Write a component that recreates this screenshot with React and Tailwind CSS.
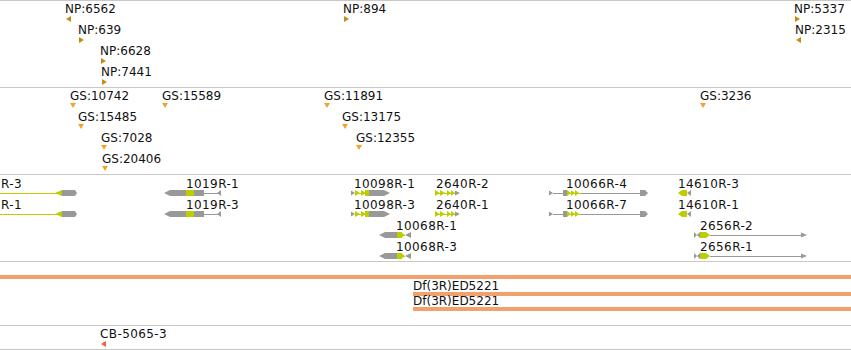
import React from "react";

// colours picked from the track glyphs
const NP_COL = "#c98a10";
const GS_COL = "#f1a42c";
const CB_COL = "#f0603c";
const YG = "#bdcd00";
const GR = "#999999";

const ROWS = [1, 22, 43, 64];
const GENE_ROWS = [2, 23, 44, 65];

const npFeatures = [
  { x: 66, row: 0, label: "NP:6562", dir: "left" },
  { x: 344, row: 0, label: "NP:894", dir: "right" },
  { x: 795, row: 0, label: "NP:5337", dir: "right" },
  { x: 79, row: 1, label: "NP:639", dir: "right" },
  { x: 796, row: 1, label: "NP:2315", dir: "left" },
  { x: 101, row: 2, label: "NP:6628", dir: "right" },
  { x: 102, row: 3, label: "NP:7441", dir: "right" },
];

const gsFeatures = [
  { x: 70, row: 0, label: "GS:10742" },
  { x: 162, row: 0, label: "GS:15589" },
  { x: 324, row: 0, label: "GS:11891" },
  { x: 700, row: 0, label: "GS:3236" },
  { x: 78, row: 1, label: "GS:15485" },
  { x: 342, row: 1, label: "GS:13175" },
  { x: 101, row: 2, label: "GS:7028" },
  { x: 356, row: 2, label: "GS:12355" },
  { x: 102, row: 3, label: "GS:20406" },
];

const geneLabels = [
  { x: 1, row: 0, label: "R-3" },
  { x: 186, row: 0, label: "1019R-1" },
  { x: 354, row: 0, label: "10098R-1" },
  { x: 436, row: 0, label: "2640R-2" },
  { x: 566, row: 0, label: "10066R-4" },
  { x: 678, row: 0, label: "14610R-3" },
  { x: 1, row: 1, label: "R-1" },
  { x: 186, row: 1, label: "1019R-3" },
  { x: 354, row: 1, label: "10098R-3" },
  { x: 436, row: 1, label: "2640R-1" },
  { x: 566, row: 1, label: "10066R-7" },
  { x: 678, row: 1, label: "14610R-1" },
  { x: 396, row: 2, label: "10068R-1" },
  { x: 700, row: 2, label: "2656R-2" },
  { x: 396, row: 3, label: "10068R-3" },
  { x: 700, row: 3, label: "2656R-1" },
];

function Tri({ dir, color }) {
  if (dir === "down")
    return (
      <svg width="6" height="5" className="block">
        <polygon points="0,0 6,0 3,5" fill={color} />
      </svg>
    );
  return (
    <svg width="5" height="6" className="block">
      <polygon points={dir === "left" ? "0,3 5,0 5,6" : "0,0 5,3 0,6"} fill={color} />
    </svg>
  );
}

// a point feature: label with its marker right under it
function Marker({ f, top, color, dir, shift = 0 }) {
  return (
    <div className="absolute flex flex-col" style={{ left: f.x, top }}>
      <div className="whitespace-nowrap leading-[14px]" style={{ marginLeft: -shift }}>
        {f.label}
      </div>
      <Tri dir={dir} color={color} />
    </div>
  );
}

const triR = (x1, x2, c, h, fill) => (
  <polygon points={`${x1},${c - h / 2} ${x2},${c} ${x1},${c + h / 2}`} fill={fill} />
);
const triL = (x1, x2, c, h, fill) => (
  <polygon points={`${x1},${c} ${x2},${c - h / 2} ${x2},${c + h / 2}`} fill={fill} />
);
const box = (x1, x2, c, h, fill) => (
  <rect x={x1} y={c - h / 2} width={x2 - x1} height={h} fill={fill} />
);
const line = (x1, x2, c, fill) => <rect x={x1} y={c} width={x2 - x1} height={1} fill={fill} />;
const arrowL = (x1, x2, t, c, h, fill) => (
  <polygon
    points={`${x1},${c} ${x1 + t},${c - h / 2} ${x2},${c - h / 2} ${x2},${c + h / 2} ${x1 + t},${c + h / 2}`}
    fill={fill}
  />
);
const arrowR = (x1, x2, t, c, h, fill) => (
  <polygon
    points={`${x1},${c - h / 2} ${x2 - t},${c - h / 2} ${x2},${c} ${x2 - t},${c + h / 2} ${x1},${c + h / 2}`}
    fill={fill}
  />
);

function GeneA({ c }) {
  return (
    <g>
      {line(0, 57, c, YG)}
      {triL(55, 62, c, 6, YG)}
      {arrowR(62, 77, 2, c, 6, GR)}
    </g>
  );
}

function Gene1019({ c }) {
  return (
    <g>
      {arrowL(164, 186, 6, c, 6, GR)}
      {box(186, 194, c, 6, YG)}
      {box(194, 204, c, 6, GR)}
      {line(204, 218, c, GR)}
      {triL(217, 221, c, 6, GR)}
    </g>
  );
}

function Gene10098({ c }) {
  return (
    <g>
      {triR(351, 355, c, 5, GR)}
      {line(355, 366, c, YG)}
      {triR(355, 360, c, 6, YG)}
      {triR(361, 366, c, 6, YG)}
      {box(365, 369, c, 6, YG)}
      {arrowR(369, 390, 6, c, 6, GR)}
    </g>
  );
}

function Gene2640({ c }) {
  return (
    <g>
      {line(435, 455, c, YG)}
      {triR(435, 440, c, 6, YG)}
      {triR(440, 445, c, 6, YG)}
      {triR(447, 451, c, 6, YG)}
      {triR(451, 455, c, 6, YG)}
      {triR(455, 460, c, 5, GR)}
    </g>
  );
}

function Gene10068({ c }) {
  return (
    <g>
      {arrowL(379, 397, 6, c, 6, GR)}
      {box(397, 402, c, 6, YG)}
      {line(402, 405, c, YG)}
      {triR(401, 405, c, 6, YG)}
      {triL(405, 411, c, 6, GR)}
    </g>
  );
}

function Gene10066({ c }) {
  return (
    <g>
      {triR(549, 553, c, 5, GR)}
      {line(553, 641, c, GR)}
      {box(563, 567, c, 6, GR)}
      {line(567, 581, c, YG)}
      {triR(567, 571, c, 6, YG)}
      {triR(571, 575, c, 6, YG)}
      {triR(575, 579, c, 6, YG)}
      {arrowR(640, 648, 3, c, 6, GR)}
    </g>
  );
}

function Gene14610({ c }) {
  return (
    <g>
      {arrowL(678, 687, 4, c, 6, YG)}
      {triL(687, 691, c, 6, GR)}
    </g>
  );
}

function Gene2656({ c }) {
  return (
    <g>
      {triR(694, 697, c, 6, GR)}
      {triL(697, 700, c, 6, GR)}
      {arrowR(700, 710, 4, c, 6, YG)}
      {line(710, 802, c, GR)}
      {triR(801, 807, c, 5, GR)}
    </g>
  );
}

export default function App() {
  const cy = GENE_ROWS.map((t) => t + 16);

  return (
    <div className="flex flex-col w-[851px] h-[350px] bg-white text-[#111] text-[12px] font-['DejaVu_Sans',sans-serif] border-t border-[#c8c8c8] overflow-hidden">
      {/* NP track */}
      <div className="relative h-[87px] shrink-0 overflow-hidden border-b border-[#c8c8c8]">
        {npFeatures.map((f) => (
          <Marker key={f.label} f={f} top={ROWS[f.row]} color={NP_COL} dir={f.dir} shift={1} />
        ))}
      </div>

      {/* GS track */}
      <div className="relative h-[87px] shrink-0 overflow-hidden border-b border-[#c8c8c8]">
        {gsFeatures.map((f) => (
          <Marker key={f.label} f={f} top={ROWS[f.row]} color={GS_COL} dir="down" />
        ))}
      </div>

      {/* gene models */}
      <div className="relative h-[87px] shrink-0 overflow-hidden border-b border-[#c8c8c8]">
        <svg width="851" height="86" className="absolute inset-0">
          <GeneA c={cy[0]} />
          <GeneA c={cy[1]} />
          <Gene1019 c={cy[0]} />
          <Gene1019 c={cy[1]} />
          <Gene10098 c={cy[0]} />
          <Gene10098 c={cy[1]} />
          <Gene2640 c={cy[0]} />
          <Gene2640 c={cy[1]} />
          <Gene10066 c={cy[0]} />
          <Gene10066 c={cy[1]} />
          <Gene14610 c={cy[0]} />
          <Gene14610 c={cy[1]} />
          <Gene10068 c={cy[2]} />
          <Gene10068 c={cy[3]} />
          <Gene2656 c={cy[2]} />
          <Gene2656 c={cy[3]} />
        </svg>
        {geneLabels.map((f) => (
          <div
            key={f.label}
            className="absolute whitespace-nowrap leading-[14px] tracking-[0.4px]"
            style={{ left: f.x, top: GENE_ROWS[f.row] }}
          >
            {f.label}
          </div>
        ))}
      </div>

      {/* deficiencies */}
      <div className="flex flex-col pt-[13px] h-[64px] shrink-0 overflow-hidden border-b border-[#c8c8c8]">
        <div className="h-[4px] bg-[#f2a06c]" />
        <div className="ml-[413px] flex flex-col">
          <div className="whitespace-nowrap leading-[14px]">Df(3R)ED5221</div>
          <div className="mt-[-1px] h-[4px] bg-[#f2a06c]" />
          <div className="mt-[-2px] whitespace-nowrap leading-[14px]">Df(3R)ED5221</div>
          <div className="mt-[-1px] h-[4px] bg-[#f2a06c]" />
        </div>
      </div>

      {/* CB track */}
      <div className="relative h-[24px] shrink-0 overflow-hidden border-b border-[#c8c8c8]">
        <div className="absolute left-[101px] top-[1px] flex flex-col">
          <div className="whitespace-nowrap leading-[14px] tracking-[0.4px] ml-[-1px]">CB-5065-3</div>
          <Tri dir="left" color={CB_COL} />
        </div>
      </div>
    </div>
  );
}
